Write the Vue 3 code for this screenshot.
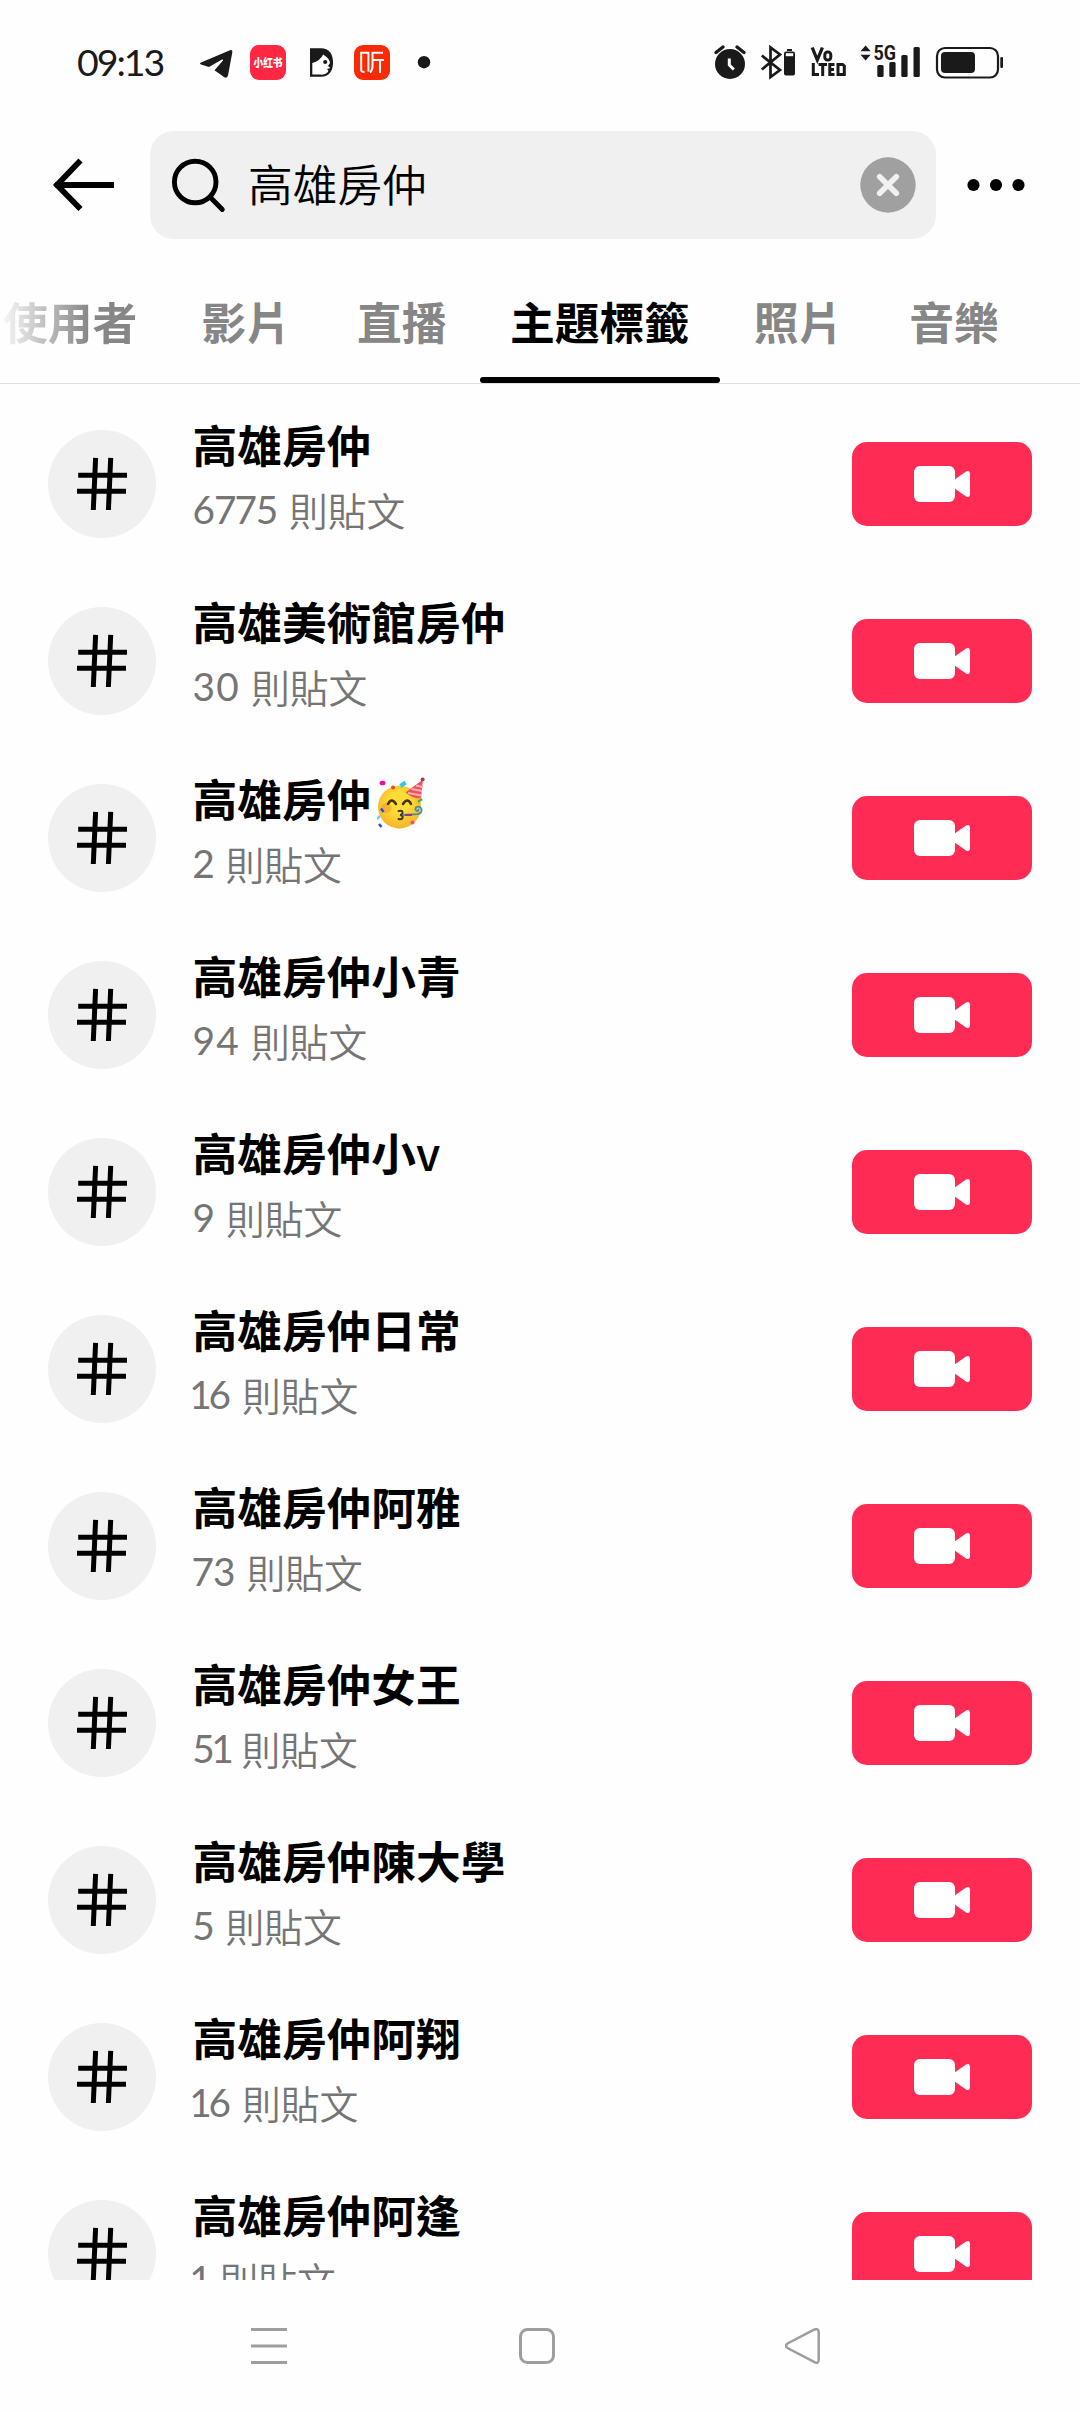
<script setup>
const tabs = ['使用者', '影片', '直播', '主題標籤', '照片', '音樂']
const activeTab = '主題標籤'

// proportional figure widths, in pixels
const advance = { 0: 25, 1: 16, 2: 22, 3: 22.5, 4: 25, 5: 22, 6: 22.5, 7: 20.5, 9: 22.5 }

const rows = [
  { title: '高雄房仲', count: '6775' },
  { title: '高雄美術館房仲', count: '30' },
  { title: '高雄房仲', party: true, count: '2' },
  { title: '高雄房仲小青', count: '94' },
  { title: '高雄房仲小', suffix: 'v', count: '9' },
  { title: '高雄房仲日常', count: '16' },
  { title: '高雄房仲阿雅', count: '73' },
  { title: '高雄房仲女王', count: '51' },
  { title: '高雄房仲陳大學', count: '5' },
  { title: '高雄房仲阿翔', count: '16' },
  { title: '高雄房仲阿逢', count: '1' }
]
</script>

<template>
  <div class="screen">
    <div class="status">
      <span class="time">09:13</span>
      <svg class="status-left" width="250" height="50" viewBox="190 38 250 50">
        <path d="M201 62.5 L230 50.2 Q232.8 49.4 232.3 52.5 L228 75.6 Q227 79 224 77 L214.5 70.3 L223 60.5 Q223.5 58.8 221.5 59.8 L209 67 L201 64.6 Q199 63.5 201 62.5Z" fill="#1a1a1a" />
        <rect x="250" y="45" width="36" height="35" rx="9" fill="#ff2741" />
        <text x="268" y="67" text-anchor="middle" font-size="11.5" font-weight="900" fill="#fff" textLength="29" lengthAdjust="spacingAndGlyphs">小红书</text>
        <path d="M310 48.3 H321 C329 48.3 333 54 333 62.5 C333 71 329 76.7 321 76.7 H310Z" fill="#1a1a1a" />
        <path d="M312.3 63 Q320 61 323.2 54.5 Q330 59 330 63 L328 66 L330.3 68 L327 69 Q329 70.5 328 72 Q325 75 321 74.6 H312.3Z" fill="#fff" />
        <circle cx="325.2" cy="62" r="2.1" fill="#1a1a1a" />
        <rect x="354" y="45" width="36" height="35" rx="9" fill="#fa2a05" />
        <g fill="none" stroke="#fff" stroke-width="2">
          <path d="M368.4 71.5 V52.7 H361.2 V70 Q361.2 72 364.5 72" />
          <path d="M383 52.8 H372.5 V66 Q372.5 70.5 370 72.5 M372.5 60 H384 M380 60 V73" />
        </g>
        <circle cx="424" cy="62.2" r="6.2" fill="#1a1a1a" />
      </svg>
      <svg class="status-right" width="310" height="50" viewBox="700 38 310 50">
        <g fill="#1a1a1a">
          <circle cx="730" cy="64" r="15" />
          <path d="M716 52.5 L723 47 M737 47 L744 52.5" stroke="#1a1a1a" stroke-width="3.4" stroke-linecap="round" />
          <path d="M729.3 58.5 V65 L733.8 69.5" fill="none" stroke="#fff" stroke-width="3" />
          <path d="M761.8 55.5 L780 70 L770.5 77 V47.5 L780 54.5 L761.8 69.5" fill="none" stroke="#1a1a1a" stroke-width="2.7" />
          <rect x="787" y="49" width="5" height="2" />
          <rect x="784" y="51.5" width="11" height="24" rx="2" />
          <rect x="785.8" y="53.2" width="7.4" height="3" fill="#fff" />
          <path d="M812.2 47.5 L817.3 60 L822.4 47.5" fill="none" stroke="#1a1a1a" stroke-width="3.3" />
          <rect x="824.8" y="52" width="6" height="8" rx="2.8" fill="none" stroke="#1a1a1a" stroke-width="3" />
          <path d="M813.3 63 V74.6 H819 M818.5 64.4 H827 M822.7 64 V76 M834.5 64.4 H829.8 V74.6 H834.5 M829.8 69.5 H834 M838 64.4 H842.5 L844.3 66 V74.6 H838Z" fill="none" stroke="#1a1a1a" stroke-width="3" />
          <path d="M860.5 51.2 L865.6 45.5 L870.7 51.2Z M860.5 54.7 L865.6 60.4 L870.7 54.7Z" />
          <text x="873.5" y="60.3" font-size="20" font-weight="700" textLength="22.5" lengthAdjust="spacingAndGlyphs" class="latin">5G</text>
          <rect x="877.3" y="65" width="6.3" height="12" rx="1.5" />
          <rect x="889.3" y="62" width="6.3" height="15" rx="1.5" />
          <rect x="901.3" y="55" width="6.3" height="22" rx="1.5" />
          <rect x="913.5" y="47" width="6.3" height="30" rx="1.5" />
          <rect x="937" y="48" width="61" height="29.5" rx="8" fill="none" stroke="#1a1a1a" stroke-width="2.2" />
          <rect x="941" y="52" width="34" height="21" rx="4" />
          <rect x="1000.3" y="57" width="2.7" height="11" rx="1.2" />
        </g>
      </svg>
    </div>

    <div class="header">
      <svg class="back" width="64" height="60" viewBox="52 155 64 60">
        <path d="M80.500 160.500 L57 185 L80.500 209 M57 185 H114" fill="none" stroke="#000" stroke-width="5.800" />
        <circle cx="57.300" cy="185" r="2.900" />
      </svg>
      <div class="search">
        <svg width="56" height="56" viewBox="170 157 56 56" fill="none" stroke="#000" stroke-width="4.900" stroke-linecap="round">
          <circle cx="195.200" cy="182" r="20.800" />
          <path d="M210.500 197.500 L222.300 209.500" />
        </svg>
        <span class="query">高雄房仲</span>
        <svg class="clear" width="56" height="56" viewBox="-28 -28 56 56">
          <circle r="27.700" fill="#a0a0a0" />
          <path d="M-8.300 -8.300 L8.300 8.300 M8.300 -8.300 L-8.300 8.300" stroke="#f1f1f1" stroke-width="5.600" stroke-linecap="round" />
        </svg>
      </div>
      <svg class="more" width="60" height="14" viewBox="966 178 60 14">
        <circle cx="973.500" cy="185" r="6.100" />
        <circle cx="996" cy="185" r="6.100" />
        <circle cx="1018.500" cy="185" r="6.100" />
      </svg>
    </div>

    <nav class="tabs">
      <div v-for="t in tabs" :key="t" class="tab" :class="{ active: t === activeTab }">{{ t }}</div>
    </nav>

    <main class="list">
      <div v-for="(r, i) in rows" :key="i" class="row">
        <div class="avatar">
          <svg width="54" height="56" viewBox="75 456 54 56" fill="none" stroke="#000" stroke-width="5">
            <path d="M95.600 457.800 L93.300 510 M110.700 457.800 L108.400 510 M78.200 475.300 H127 M77 491.300 H126" />
          </svg>
        </div>
        <div class="info">
          <div class="title">
            <span>{{ r.title }}</span><span v-if="r.suffix" class="suffix">{{ r.suffix }}</span>
            <svg v-if="r.party" class="party" width="48" height="52" viewBox="0 0 48 52">
              <defs>
                <radialGradient id="face" cx=".5" cy=".4" r=".6">
                  <stop offset=".4" stop-color="#fddc35" />
                  <stop offset="1" stop-color="#f4b32a" />
                </radialGradient>
              </defs>
              <circle cx="22.500" cy="30" r="21.500" fill="url(#face)" />
              <circle cx="9.500" cy="31" r="5" fill="#f59a35" opacity=".6" />
              <path d="M28.500 15.500 L46 2.500 L44 21.500 Q36 22 28.500 15.500Z" fill="#f0525d" />
              <path d="M31 16 L44.500 18.500 M34.500 12 L45 14 M39 8.500 L45.500 10" stroke="#ffb0b4" stroke-width="1.800" />
              <circle cx="45.600" cy="2.600" r="2" fill="#a83c3c" />
              <path d="M11 27 Q14.500 20 19 27 M26 27 Q30.500 20 34 27" fill="none" stroke="#49320f" stroke-width="2.500" stroke-linecap="round" />
              <path d="M21.500 34 Q26 33 25.500 36 Q25 38 23 38 Q26.500 38.500 25.500 41 Q24.500 43 21.500 42" fill="none" stroke="#49320f" stroke-width="2" stroke-linecap="round" />
              <path d="M25.500 38 L40 37.200 Q45.500 36.500 44.500 32 Q43 28.500 39.500 30 Q37 32.500 40 34 Q42 34 41 32" fill="none" stroke="#438dae" stroke-width="1.800" />
              <path d="M28 38 H35" stroke="#a62f84" stroke-width="2" />
              <ellipse cx="5.500" cy="6" rx="3" ry="2.300" fill="#e8139c" />
              <circle cx="16" cy="10.500" r="2" fill="#e24b35" />
              <path d="M23.500 9 L28.500 5.500" stroke="#2cc6e6" stroke-width="4" />
              <path d="M41 25 L45 22" stroke="#4bb43c" stroke-width="2.500" />
              <path d="M4 31.500 L6.500 35 M2 47 L4.500 50" stroke="#2953ca" stroke-width="2.600" />
              <path d="M0 42 L3 39" stroke="#75c9ed" stroke-width="2.500" />
              <circle cx="35.500" cy="45.500" r="2" fill="#ed4c91" />
            </svg>
          </div>
          <div class="meta">
            <span class="num"><span v-for="(d, k) in r.count" :key="k" class="digit" :style="{ width: advance[d] + 'px' }">{{ d }}</span></span>
            <span>則貼文</span>
          </div>
        </div>
        <div class="record">
          <svg width="56" height="36" viewBox="0 0 56 36" fill="#fff">
            <rect width="41" height="36" rx="6" />
            <path d="M40 14 L52 5.500 Q55.500 4 56 7.500 V28.500 Q55.500 32.300 52 30.500 L40 22Z" />
          </svg>
        </div>
      </div>
    </main>

    <div class="navbar">
      <svg width="36" height="36" viewBox="0 0 36 36"><path d="M0 1.500 H36 M0 18 H36 M0 34.500 H36" stroke="#9e9e9e" stroke-width="3" /></svg>
      <svg width="36" height="36" viewBox="0 0 36 36"><rect x="1.500" y="1.500" width="33" height="33" rx="7" fill="none" stroke="#9e9e9e" stroke-width="3" /></svg>
      <svg width="36" height="36" viewBox="0 0 36 36"><path d="M2.500 15.500 L29 1.700 Q33.500 0 33.700 4 V32 Q33.500 36 29.500 34.200 L2.500 20 Q-.5 17.800 2.500 15.500Z" fill="none" stroke="#9e9e9e" stroke-width="2.500" /></svg>
    </div>
  </div>
</template>

<style>
body {
  margin: 0;
  background: #fefefe;
}
</style>

<style scoped>
.screen {
  width: 1080px;
  height: 2412px;
  overflow: hidden;
  display: flex;
  flex-direction: column;
  background: #fefefe;
  color: #000;
  font-family: "Noto Sans CJK TC", "Noto Sans CJK SC", sans-serif;
}
.screen svg {
  display: block;
  flex: none;
}
.latin {
  font-family: Roboto, sans-serif;
}
.status {
  height: 131px;
  box-sizing: border-box;
  padding: 38px 0 0 77px;
  display: flex;
  align-items: flex-start;
}
.time {
  width: 113px;
  font: 400 37.500px/48px Lato, sans-serif;
  letter-spacing: -2px;
  color: #1a1a1a;
  white-space: nowrap;
}
.status-right {
  margin-left: 260px;
}
.header {
  height: 108px;
  display: flex;
  align-items: center;
}
.back {
  margin-left: 52px;
}
.search {
  width: 786px;
  height: 108px;
  margin-left: 34px;
  box-sizing: border-box;
  padding: 0 20px;
  border-radius: 24px;
  background: #f0f0f0;
  display: flex;
  align-items: center;
}
.query {
  flex: 1;
  margin-left: 22px;
  padding-bottom: 4px;
  font-size: 44.700px;
  line-height: 60px;
  font-weight: 350;
}
.more {
  margin-left: 30px;
}
.tabs {
  height: 145px;
  box-sizing: border-box;
  border-bottom: 1px solid #dedede;
  padding-top: 34px;
  display: flex;
  overflow: hidden;
}
.tab {
  flex: none;
  height: 110px;
  box-sizing: border-box;
  padding-top: 15px;
  margin-right: 66px;
  font-size: 44.800px;
  line-height: 66px;
  font-weight: 700;
  color: #868686;
  white-space: nowrap;
}
.tab:first-child {
  margin-left: 3px;
  margin-right: 64px;
  background: linear-gradient(90deg, #f6f6f6 0, #868686 86px);
  background-clip: text;
  -webkit-background-clip: text;
  color: transparent;
}
.tab.active {
  width: 240px;
  margin: 0 34px 0 -33px;
  color: #000;
  text-align: center;
}
.tab.active::after {
  content: "";
  display: block;
  height: 6px;
  margin-top: 23px;
  border-radius: 3px;
  background: #000;
}
.list {
  height: 1896px;
  box-sizing: border-box;
  padding-top: 11px;
  overflow: hidden;
}
.row {
  height: 177px;
  box-sizing: border-box;
  padding: 0 48px;
  display: flex;
  align-items: center;
}
.avatar {
  width: 108px;
  height: 108px;
  border-radius: 50%;
  background: #f0f0f0;
  display: flex;
  align-items: center;
  justify-content: center;
}
.info {
  flex: 1;
  margin-left: 36.500px;
  padding-bottom: 16px;
}
.title {
  display: flex;
  height: 67px;
  font-size: 44.700px;
  line-height: 66px;
  font-weight: 700;
}
.suffix {
  font-weight: 500;
}
.party {
  margin: 12px 0 0 6px;
}
.meta {
  display: flex;
  height: 62px;
  font-size: 38.800px;
  line-height: 62px;
  font-weight: 350;
  color: #757575;
}
.num {
  display: flex;
  font-family: Lato, sans-serif;
  font-weight: 400;
  margin-right: 11px;
}
.digit {
  display: flex;
  justify-content: center;
}
.record {
  width: 180px;
  height: 84px;
  border-radius: 15px;
  background: #fe2c55;
  display: flex;
  align-items: center;
  justify-content: center;
}
.navbar {
  flex: 1;
  display: flex;
  align-items: center;
  justify-content: space-between;
  padding: 0 259px 0 251px;
}
.navbar svg:nth-child(2) {
  margin-left: 2px;
}
</style>
